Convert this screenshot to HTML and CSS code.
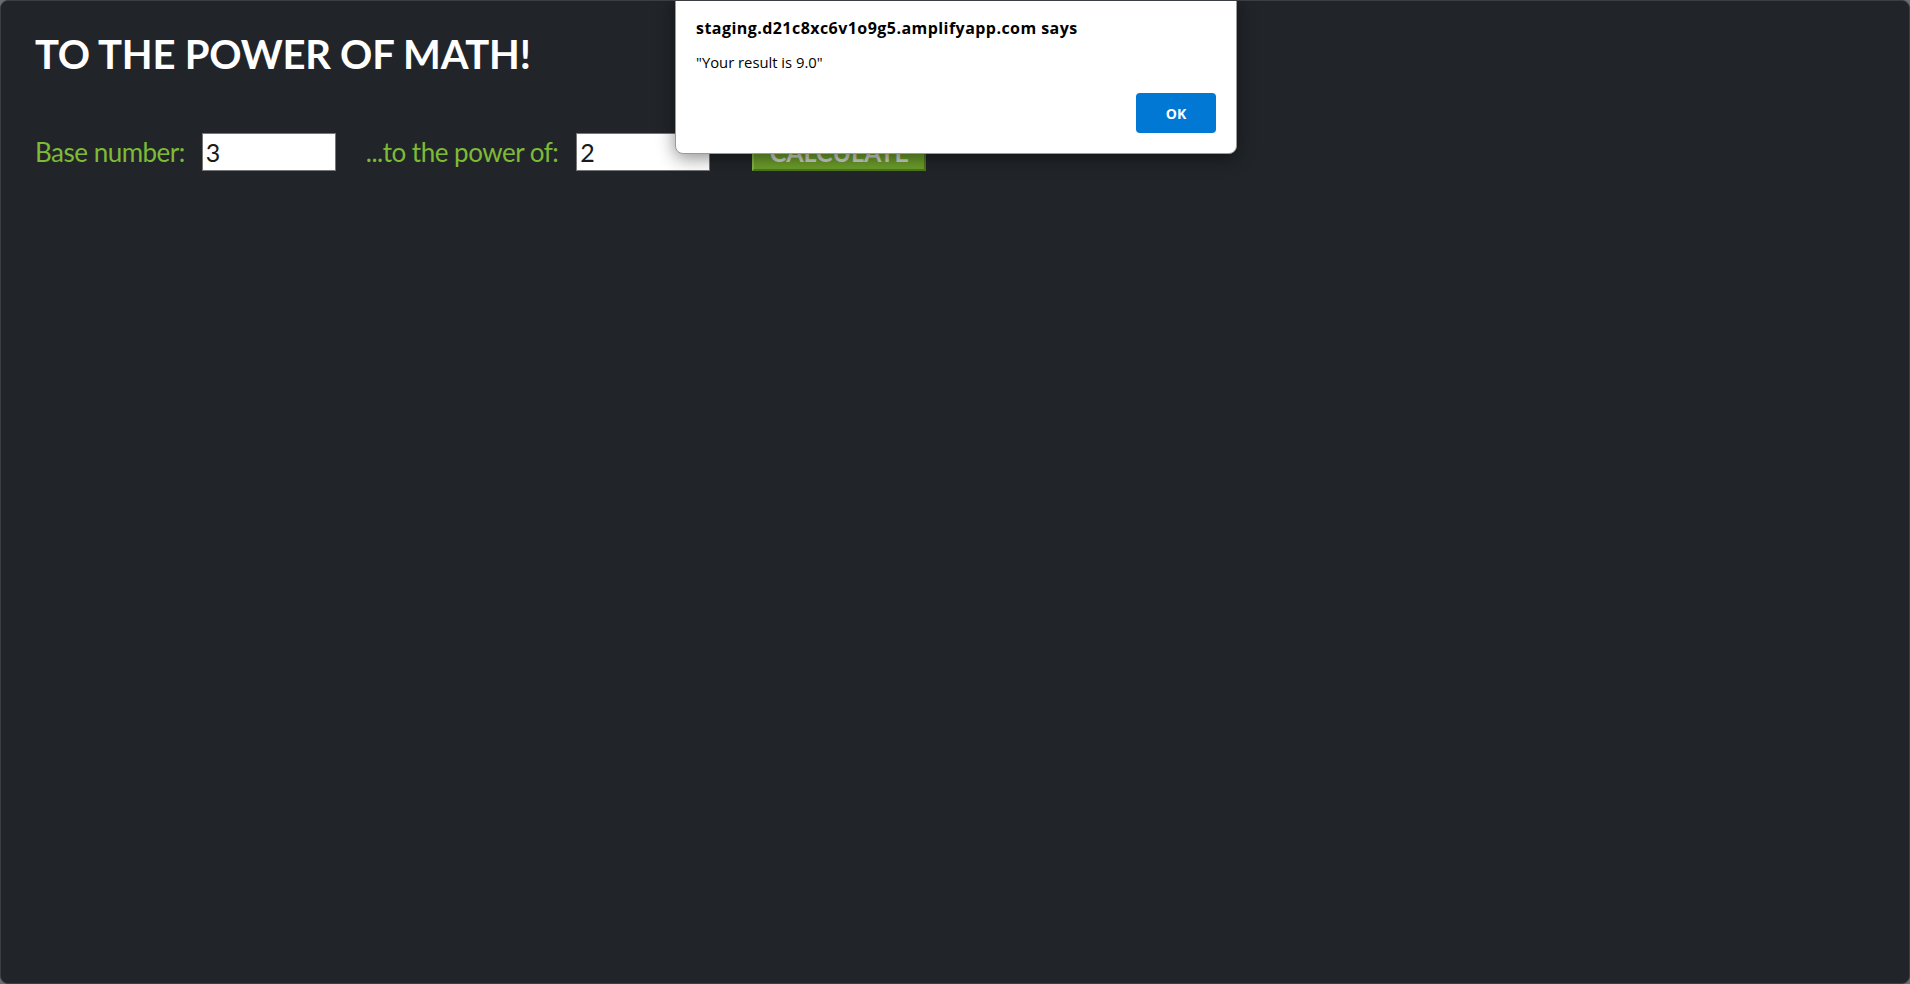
FILE: index.html
```html
<!DOCTYPE html>
<html lang="en">
<head>
<meta charset="utf-8">
<title>To the power of math</title>
<link rel="stylesheet" href="styles.css">
</head>
<body>
<div class="window">
  <h1 class="title">TO THE POWER OF MATH!</h1>
  <form class="calc-row">
    <label class="field-label" for="base">Base number:</label>
    <input class="num-input" id="base" type="text" value="3">
    <label class="field-label label-power" for="power">...to the power of:</label>
    <input class="num-input" id="power" type="text" value="2">
    <button class="calc-btn" type="button">CALCULATE</button>
  </form>

  <div class="alert">
    <div class="alert-title">staging.d21c8xc6v1o9g5.amplifyapp.com says</div>
    <div class="alert-msg">"Your result is 9.0"</div>
    <div class="alert-actions">
      <button class="alert-ok" type="button">OK</button>
    </div>
  </div>
</div>
</body>
</html>
```

FILE: styles.css
```css
html, body {
  margin: 0;
  padding: 0;
  background: #6a6e71;
}

body {
  font-family: Lato, "Open Sans", sans-serif;
}

.window {
  position: relative;
  box-sizing: border-box;
  height: 984px;
  background: #212529;
  border: 1px solid #3b3f43;
  border-radius: 8px;
  padding: 29px 34px;
  overflow: hidden;
}

.title {
  margin: 0;
  font-size: 40px;
  line-height: 48px;
  font-weight: 700;
  letter-spacing: -0.25px;
  color: #ffffff;
}

.calc-row {
  display: flex;
  align-items: center;
  margin-top: 54px;
}

.field-label {
  font-size: 26px;
  line-height: 38px;
  letter-spacing: -0.5px;
  color: #7dbb36;
  margin-right: 17px;
}

.label-power {
  margin-left: 30px;
  margin-right: 18px;
}

.num-input {
  box-sizing: border-box;
  width: 134px;
  height: 38px;
  border: 1px solid #767676;
  background: #ffffff;
  color: #1a1a1a;
  font-family: Lato, "Open Sans", sans-serif;
  font-size: 25px;
  padding: 0 3px;
  margin: 0;
  outline: none;
}

.calc-btn {
  box-sizing: border-box;
  height: 39px;
  width: 174px;
  margin-left: 42px;
  background: #6b9c2b;
  color: #cfd2cc;
  font-family: Lato, "Open Sans", sans-serif;
  font-weight: 700;
  font-size: 25px;
  border: 2px solid;
  border-color: #86b447 #4c7619 #4c7619 #86b447;
  padding: 0;
}

.alert {
  position: absolute;
  left: 674px;
  top: -8px;
  box-sizing: border-box;
  width: 562px;
  background: #ffffff;
  border: 1px solid #9a9a9a;
  border-radius: 8px;
  box-shadow: 0 4px 18px rgba(0, 0, 0, 0.45);
  padding: 24px 20px 20px 20px;
  font-family: "Open Sans", Lato, sans-serif;
  color: #000;
}

.alert-title {
  font-weight: 700;
  font-size: 16px;
  line-height: 20px;
  letter-spacing: 0.45px;
}

.alert-msg {
  margin-top: 14px;
  font-size: 14.8px;
  line-height: 20px;
}

.alert-actions {
  display: flex;
  justify-content: flex-end;
  margin-top: 21px;
}

.alert-ok {
  width: 80px;
  height: 40px;
  border: none;
  border-radius: 4px;
  background: #0078d4;
  color: #ffffff;
  font-family: "Open Sans", Lato, sans-serif;
  font-weight: 700;
  font-size: 14px;
}
```
